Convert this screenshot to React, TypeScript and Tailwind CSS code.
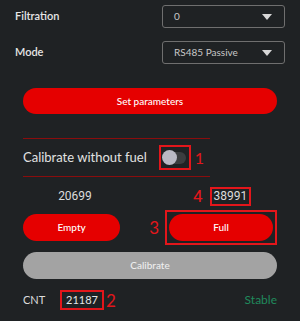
import React from 'react';

function Select({ value }: { value: string }) {
  return (
    <div className="flex h-[23px] w-[123px] items-center justify-between rounded-[3px] border border-[#6f6f6f] pl-[11px] pr-[12px]">
      <span className="text-[10px] text-[#c8c8c8]">{value}</span>
      <span className="h-0 w-0 border-x-[5px] border-t-[6px] border-x-transparent border-t-[#d8d8d8]" />
    </div>
  );
}

export default function App() {
  return (
    <div
      className="relative h-[321px] w-[300px] overflow-hidden bg-[#1f2224] text-[#e6e6e6]"
      style={{ fontFamily: 'Lato, "Noto Sans", sans-serif' }}
    >
      <div className="flex items-center justify-between pl-[15px] pr-[15px] pt-[5px]">
        <span className="text-[11px] font-semibold">Filtration</span>
        <Select value="0" />
      </div>
      <div className="mt-[13px] flex items-center justify-between pl-[15px] pr-[15px]">
        <span className="text-[11px] font-semibold">Mode</span>
        <Select value="RS485 Passive" />
      </div>

      <div className="px-[23px]">
        <button className="mt-[24px] flex h-[26px] w-full items-center justify-center rounded-full bg-[#e50000] text-[10px] font-medium text-white">
          Set parameters
        </button>

        <div className="mt-[24px] h-[1px] w-[187px] bg-[#8a0d0d]" />

        <div className="flex h-[37px] items-center">
          <span className="text-[13px] text-[#e2e2e2]">Calibrate without fuel</span>
          <span className="ml-[12px] flex h-[25px] w-[32px] items-center justify-center border-2 border-[#e3161b]">
            <span className="relative h-[12px] w-[23px] rounded-full bg-[#3b3d3f]">
              <span className="absolute left-[-1px] top-[-2px] h-[15px] w-[15px] rounded-full bg-[#b9b9c4]" />
            </span>
          </span>
          <span className="ml-[4px] text-[16px] leading-none text-[#e3161b]">1</span>
        </div>

        <div className="h-[1px] w-[187px] bg-[#8a0d0d]" />

        <div className="mt-[9px] flex h-[20px] items-center" style={{ fontFamily: 'Roboto, sans-serif' }}>
          <span className="w-[104px] text-center text-[12px] text-[#dcdcdc]">20699</span>
          <span className="ml-[66px] text-[17px] leading-none text-[#e3161b]">4</span>
          <span className="ml-[7px] border-2 border-[#e3161b] px-[2px] text-[12px] leading-[15px] text-[#dcdcdc]">38991</span>
        </div>

        <div className="mt-[4px] flex items-center">
          <button className="flex h-[27px] w-[104px] items-center justify-center rounded-full bg-[#e50000] text-[10px] font-medium text-white">
            Empty
          </button>
          <span className="ml-[29px] text-[17px] leading-none text-[#e3161b]">3</span>
          <span className="ml-[6px] border-2 border-[#e3161b] p-[2px]">
            <button className="flex h-[27px] w-[104px] items-center justify-center rounded-full bg-[#e50000] text-[10px] font-medium text-white">
              Full
            </button>
          </span>
        </div>

        <button className="mt-[7px] flex h-[27px] w-full items-center justify-center rounded-full bg-[#a3a3a3] text-[10px] font-medium text-[#eeeeee]">
          Calibrate
        </button>

        <div className="mt-[11px] flex items-center">
          <span className="w-[37px] text-[11px] text-[#dcdcdc]">CNT</span>
          <span className="border-2 border-[#e3161b] px-[4px] text-[11px] leading-[16px] text-[#e6e6e6]">21187</span>
          <span className="ml-[2px] text-[17px] leading-none text-[#e3161b]">2</span>
          <span className="ml-auto text-[12px] text-[#1f8a5c]">Stable</span>
        </div>
      </div>
    </div>
  );
}
